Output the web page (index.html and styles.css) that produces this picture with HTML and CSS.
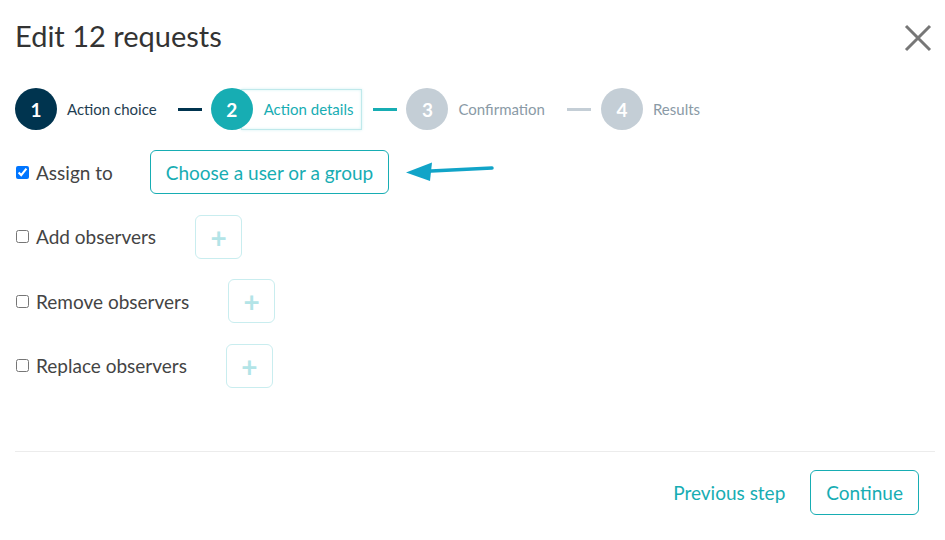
FILE: index.html
```html
<!DOCTYPE html>
<html>
<head>
<meta charset="utf-8">
<link rel="stylesheet" href="styles.css">
</head>
<body>
<div class="modal">
  <header class="head">
    <h1 class="title">Edit 12 requests</h1>
    <button class="close" aria-label="Close">
      <svg width="28" height="28" viewBox="0 0 28 28"><path d="M2 2 L26 26 M26 2 L2 26" stroke="#777" stroke-width="3" fill="none"/></svg>
    </button>
  </header>

  <nav class="steps">
    <div class="step done">
      <span class="num">1</span><span class="label">Action choice</span>
    </div>
    <span class="bar bar-done"></span>
    <div class="step active">
      <span class="num">2</span><span class="label">Action details</span>
    </div>
    <span class="bar bar-active"></span>
    <div class="step todo">
      <span class="num">3</span><span class="label">Confirmation</span>
    </div>
    <span class="bar bar-todo"></span>
    <div class="step todo">
      <span class="num">4</span><span class="label">Results</span>
    </div>
  </nav>

  <div class="rows">
    <div class="row">
      <label class="check"><input type="checkbox" checked> Assign to</label>
      <button class="choose">Choose a user or a group</button>
      <svg class="arrow" width="90" height="24" viewBox="0 0 90 24"><path d="M20 11.2 L86 8" stroke="#11a4c8" stroke-width="3.5" stroke-linecap="round" fill="none"/><path d="M0 12.5 L26 2.5 L24 21 Z" fill="#11a4c8"/></svg>
    </div>
    <div class="row">
      <label class="check"><input type="checkbox"> Add observers</label>
      <button class="plus">+</button>
    </div>
    <div class="row">
      <label class="check"><input type="checkbox"> Remove observers</label>
      <button class="plus">+</button>
    </div>
    <div class="row">
      <label class="check"><input type="checkbox"> Replace observers</label>
      <button class="plus">+</button>
    </div>
  </div>

  <footer class="foot">
    <button class="link">Previous step</button>
    <button class="continue">Continue</button>
  </footer>
</div>
</body>
</html>
```

FILE: styles.css
```css
* { box-sizing: border-box; }
html, body { margin: 0; padding: 0; background: #fff; }
body { font-family: Lato, "Open Sans", sans-serif; color: #444; }
.modal { width: 945px; height: 540px; padding: 0 10px 0 15px; }

.head { display: flex; justify-content: space-between; align-items: flex-start; height: 88px; }
.title { margin: 0; padding-top: 18px; font-size: 29px; line-height: 36px; font-weight: 400; color: #333; }
.close { border: 0; background: none; padding: 0; margin-right: 3px; margin-top: 24px; display: flex; }

.steps { display: flex; align-items: center; height: 42px; }
.step { display: flex; align-items: center; }
.num { width: 42px; height: 42px; border-radius: 50%; display: flex; align-items: center; justify-content: center; color: #fff; font-weight: 700; font-size: 19px; position: relative; z-index: 1; }
.label { font-size: 15px; margin-left: 10px; }
.done .num { background: #00344f; }
.done .label { color: #1f3e52; }
.active .num { background: #17adb3; }
.active .label { color: #17adb3; margin-left: -12px; padding: 0 8px 0 22px; height: 41px; display: flex; align-items: center; border: 1px solid #bfe9eb; box-shadow: inset 0 0 3px #d5f2f3, 0 0 3px #d5f2f3; }
.todo .num { background: #c4ced6; }
.todo .label { color: #8a9aa6; }
.bar { width: 24px; height: 3px; margin: 0 9px 0 20px; }
.bar-done { background: #00344f; margin-left: 21px; }
.bar-active { background: #17adb3; margin-left: 11px; }
.bar-todo { background: #c4ced6; margin-left: 22px; margin-right: 10px; }

.rows { margin-top: 20px; display: flex; flex-direction: column; gap: 20.5px; }
.row { display: flex; align-items: center; height: 44px; }
.check { display: flex; align-items: center; font-size: 19px; color: #444; }
.check input { margin: 0 7px 0 1px; width: 13px; height: 13px; }
.choose { margin-left: 37px; height: 44px; padding: 0 15px; border: 1px solid #17adb3; border-radius: 6px; background: #fff; color: #17adb3; font-family: Lato, sans-serif; font-size: 19px; }
.arrow { margin-left: 17px; }
.plus { margin-left: 39px; width: 47px; height: 44px; border: 1px solid #c9edef; border-radius: 6px; background: #fff; color: #b3e4e7; font-family: Lato, sans-serif; font-size: 28px; font-weight: 700; padding: 0; line-height: 1; }

.foot { margin-top: 63px; border-top: 1px solid #ececec; display: flex; justify-content: flex-end; align-items: center; padding-top: 18px; padding-right: 16px; }
.link { border: 0; background: none; color: #17adb3; font-family: Lato, sans-serif; font-size: 19px; padding: 0; margin-right: 25px; }
.continue { height: 45px; padding: 0 15px; border: 1px solid #17adb3; border-radius: 6px; background: #fff; color: #17adb3; font-family: Lato, sans-serif; font-size: 19px; }
```
